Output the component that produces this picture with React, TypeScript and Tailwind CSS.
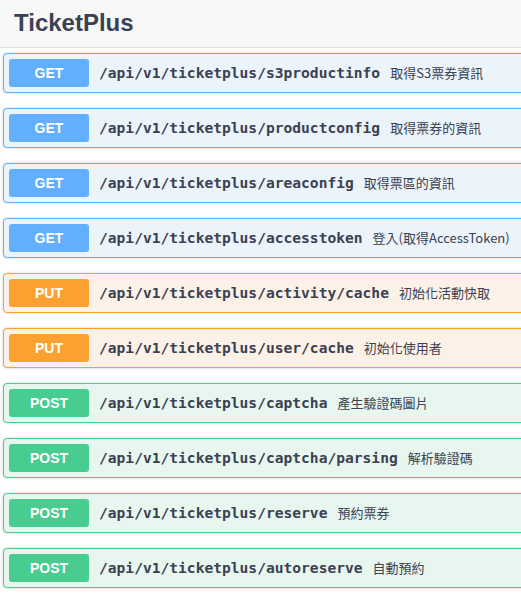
const ops = [
  { method: 'GET', path: '/api/v1/ticketplus/s3productinfo', summary: '取得S3票券資訊' },
  { method: 'GET', path: '/api/v1/ticketplus/productconfig', summary: '取得票券的資訊' },
  { method: 'GET', path: '/api/v1/ticketplus/areaconfig', summary: '取得票區的資訊' },
  { method: 'GET', path: '/api/v1/ticketplus/accesstoken', summary: '登入(取得AccessToken)' },
  { method: 'PUT', path: '/api/v1/ticketplus/activity/cache', summary: '初始化活動快取' },
  { method: 'PUT', path: '/api/v1/ticketplus/user/cache', summary: '初始化使用者' },
  { method: 'POST', path: '/api/v1/ticketplus/captcha', summary: '產生驗證碼圖片' },
  { method: 'POST', path: '/api/v1/ticketplus/captcha/parsing', summary: '解析驗證碼' },
  { method: 'POST', path: '/api/v1/ticketplus/reserve', summary: '預約票券' },
  { method: 'POST', path: '/api/v1/ticketplus/autoreserve', summary: '自動預約' },
];

const styles: Record<string, { row: string; badge: string }> = {
  GET: { row: 'bg-[#ebf3fb] border-[#61affe]', badge: 'bg-[#61affe]' },
  PUT: { row: 'bg-[#fcf1e6] border-[#fca130]', badge: 'bg-[#fca130]' },
  POST: { row: 'bg-[#e8f6f0] border-[#49cc90]', badge: 'bg-[#49cc90]' },
};

export default function App() {
  return (
    <div className="w-[521px] h-[596px] overflow-hidden bg-white">
      <div className="w-[560px]">
        <div className="h-[48px] bg-[#f7f7f7] border-b border-[#d8dde7] flex items-center pl-[14px] pb-[2px]">
          <h2 className="text-[24px] font-bold text-[#3b4151] font-['Liberation_Sans',Arial,sans-serif]">
            TicketPlus
          </h2>
        </div>
        <div className="pl-[3px] pt-[5px]">
          {ops.map((op, i) => (
            <div
              key={i}
              className={`flex items-center border rounded-[4px] p-[5px] mb-[15px] shadow-[0_0_3px_rgba(0,0,0,0.19)] ${styles[op.method].row}`}
            >
              <span
                className={`w-[80px] h-[28px] rounded-[3px] flex items-center justify-center text-white text-[14px] font-bold font-['Liberation_Sans',Arial,sans-serif] ${styles[op.method].badge}`}
              >
                {op.method}
              </span>
              <span className="ml-[10px] text-[14.6px] font-bold text-[#3b4151] font-['DejaVu_Sans_Mono',monospace]">
                {op.path}
              </span>
              <span className="ml-[10px] text-[13px] text-[#3b4151] font-['Noto_Sans_CJK_TC','Noto_Sans',sans-serif]">
                {op.summary}
              </span>
            </div>
          ))}
        </div>
      </div>
    </div>
  );
}
